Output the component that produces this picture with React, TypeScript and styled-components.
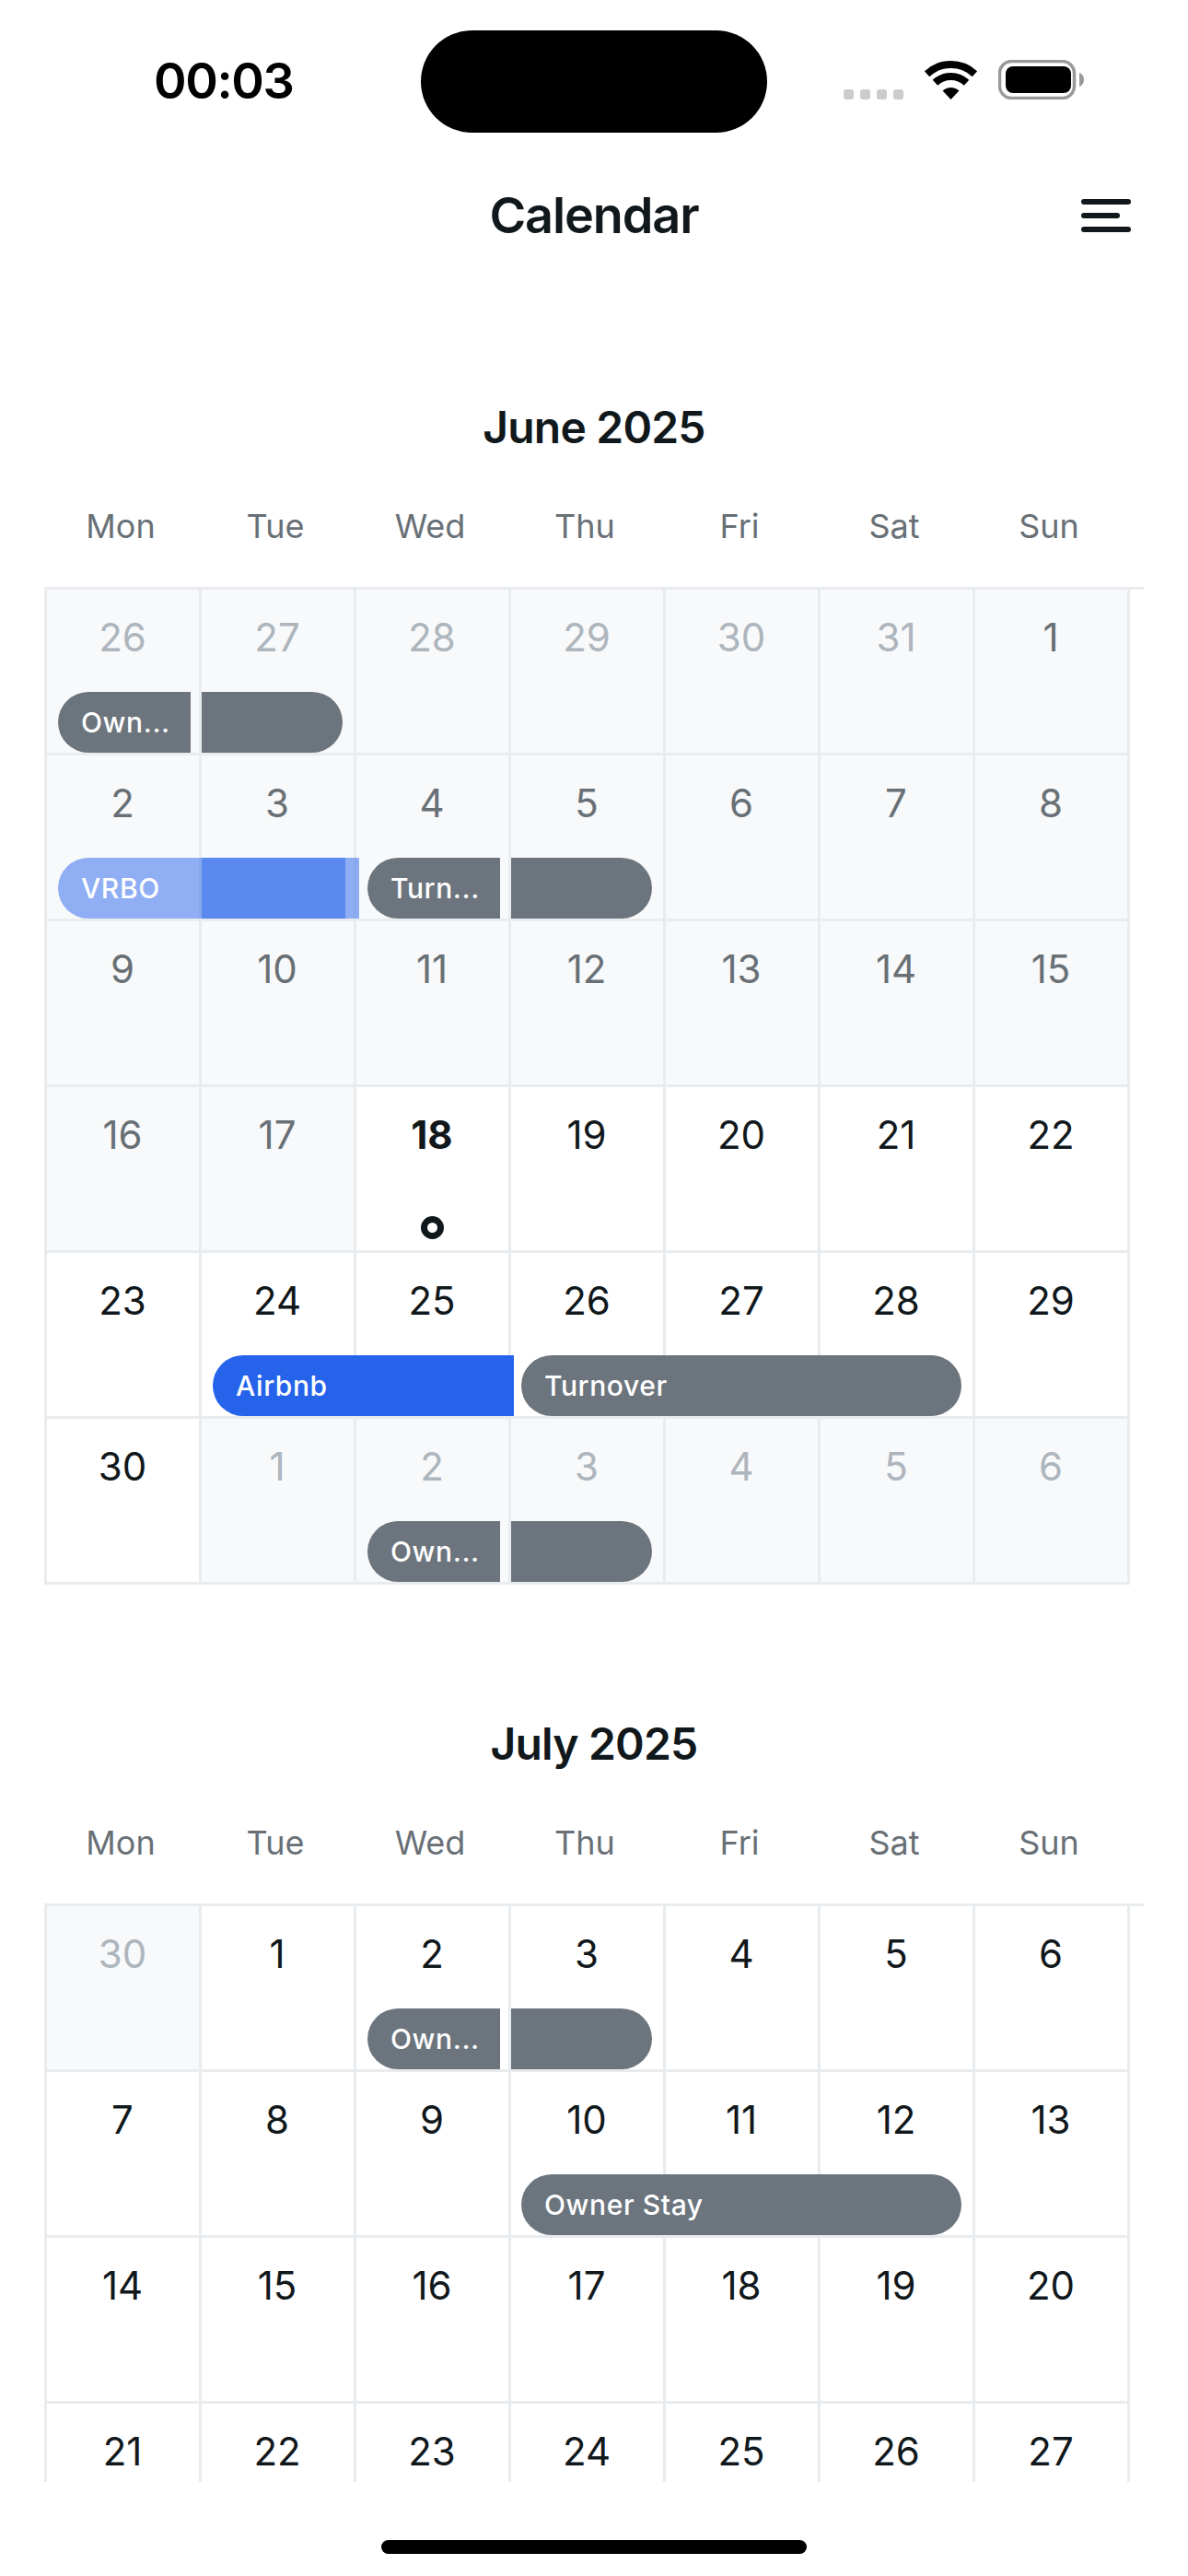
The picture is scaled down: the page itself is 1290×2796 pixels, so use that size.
import React from 'react'
import styled, { createGlobalStyle } from 'styled-components'

type DayKind = 'outside' | 'past' | 'today' | 'normal'
type BarShape = 'start' | 'end' | 'full' | 'startFlat' | 'endTint' | 'startTint'

type Bar = {
  label?: string
  shape: BarShape
  width: number
  left: number
  color: string
}

type Day = {
  n: number
  kind: DayKind
  bars?: Bar[]
}

const GREY = '#6c757d'
const BLUE = '#2563eb'
const TINT = 'rgba(37, 99, 235, 0.5)'

const weekdays = ['Mon', 'Tue', 'Wed', 'Thu', 'Fri', 'Sat', 'Sun']

const ownerSplit = (label: string): Bar => ({ label, shape: 'start', left: 12, width: 144, color: GREY })
const ownerTail: Bar = { shape: 'end', left: 0, width: 153, color: GREY }

const range = (from: number, to: number, kind: DayKind): Day[] => {
  const out: Day[] = []
  for (let n = from; n <= to; n++) out.push({ n, kind })
  return out
}

const withBars = (days: Day[], n: number, bars: Bar[]) =>
  days.map((d) => (d.n === n ? { ...d, bars } : d))

const buildJune = (): Day[] => {
  let may = range(26, 31, 'outside')
  may = withBars(may, 26, [ownerSplit('Own...')])
  may = withBars(may, 27, [ownerTail])

  let june = [
    ...range(1, 17, 'past'),
    { n: 18, kind: 'today' as DayKind },
    ...range(19, 30, 'normal'),
  ]
  june = withBars(june, 2, [{ label: 'VRBO', shape: 'startTint', left: 12, width: 312, color: TINT }])
  june = withBars(june, 3, [{ shape: 'endTint', left: 0, width: 171, color: TINT }])
  june = withBars(june, 4, [ownerSplit('Turn...')])
  june = withBars(june, 5, [ownerTail])
  june = withBars(june, 24, [{ label: 'Airbnb', shape: 'startFlat', left: 12, width: 327, color: BLUE }])
  june = withBars(june, 26, [{ label: 'Turnover', shape: 'full', left: 11, width: 478, color: GREY }])

  let next = range(1, 6, 'outside')
  next = withBars(next, 2, [ownerSplit('Own...')])
  next = withBars(next, 3, [ownerTail])

  return [...may, ...june, ...next]
}

const buildJuly = (): Day[] => {
  let july = range(1, 27, 'normal')
  july = withBars(july, 2, [ownerSplit('Own...')])
  july = withBars(july, 3, [ownerTail])
  july = withBars(july, 10, [{ label: 'Owner Stay', shape: 'full', left: 11, width: 478, color: GREY }])
  return [{ n: 30, kind: 'outside' }, ...july]
}

const months = [
  { title: 'June 2025', days: buildJune() },
  { title: 'July 2025', days: buildJuly() },
]

export default function App() {
  return (
    <>
      <GlobalStyle />
      <Screen>
        <StatusBar>
          <Clock>00:03</Clock>
          <Island />
          <StatusIcons>
            <SignalDots>
              <SignalDot />
              <SignalDot />
              <SignalDot />
              <SignalDot />
            </SignalDots>
            <svg width="57" height="42" viewBox="0 0 57 42">
              <path d="M2.6 14.2A38 38 0 0 1 54.4 14.2" fill="none" stroke="#000" strokeWidth="8" />
              <path d="M11.45 23.7A25 25 0 0 1 45.55 23.7" fill="none" stroke="#000" strokeWidth="8" />
              <path d="M28.5 42L19.6 32.5A13 13 0 0 1 37.4 32.5Z" fill="#000" />
            </svg>
            <svg width="93" height="43" viewBox="0 0 93 43">
              <rect x="1.5" y="1.5" width="81" height="40" rx="13" fill="none" stroke="#999" strokeWidth="3.5" />
              <rect x="8" y="7" width="71" height="29" rx="8" fill="#000" />
              <path d="M88 14C91 15 93 18 93 21.5S91 28 88 29Z" fill="#999" />
            </svg>
          </StatusIcons>
        </StatusBar>

        <NavBar>
          <span />
          <NavTitle>Calendar</NavTitle>
          <MenuButton>
            <MenuLine />
            <MenuLine $short />
            <MenuLine />
          </MenuButton>
        </NavBar>

        <ScrollArea>
          {months.map((month) => (
            <Month key={month.title}>
              <MonthTitle>{month.title}</MonthTitle>
              <WeekRow>
                {weekdays.map((w) => (
                  <WeekLabel key={w}>{w}</WeekLabel>
                ))}
              </WeekRow>
              <Grid>
                {month.days.map((day, i) => (
                  <Cell key={i} $kind={day.kind}>
                    <DayNumber $kind={day.kind}>{day.n}</DayNumber>
                    {day.kind === 'today' && <TodayRing />}
                    {day.bars?.map((bar, j) => (
                      <EventBar key={j} $shape={bar.shape} $left={bar.left} $width={bar.width} $color={bar.color}>
                        {bar.label}
                      </EventBar>
                    ))}
                  </Cell>
                ))}
              </Grid>
            </Month>
          ))}
        </ScrollArea>

        <HomeArea>
          <HomeBar />
        </HomeArea>
      </Screen>
    </>
  )
}

const GlobalStyle = createGlobalStyle`
  html, body {
    margin: 0;
    padding: 0;
    background: #fff;
  }
  * {
    box-sizing: border-box;
  }
`

const Screen = styled.div`
  width: 1290px;
  height: 2796px;
  display: flex;
  flex-direction: column;
  overflow: hidden;
  background: #ffffff;
  font-family: Inter, 'Noto Sans', sans-serif;
  color: #11181c;
`

const StatusBar = styled.div`
  height: 162px;
  padding: 33px 0 0 0;
  display: grid;
  grid-template-columns: 457px 376px 1fr;
  align-items: flex-start;
`

const Clock = styled.div`
  padding: 28px 0 0 167px;
  font-size: 54px;
  line-height: 54px;
  font-weight: 600;
  letter-spacing: -1.4px;
  color: #000;
`

const Island = styled.div`
  height: 111px;
  border-radius: 56px;
  background: #000;
`

const StatusIcons = styled.div`
  padding: 32px 0 0 83px;
  display: flex;
  align-items: flex-end;
  gap: 23px;
`

const SignalDots = styled.div`
  display: flex;
  gap: 7px;
`

const SignalDot = styled.div`
  width: 11px;
  height: 11px;
  border-radius: 3px;
  background: #cccccc;
`

const NavBar = styled.div`
  height: 144px;
  padding: 0 62px;
  display: grid;
  grid-template-columns: 1fr auto 1fr;
  align-items: center;
`

const NavTitle = styled.div`
  font-size: 54px;
  line-height: 72px;
  font-weight: 600;
  letter-spacing: -1.1px;
  color: #11181c;
`

const MenuButton = styled.div`
  justify-self: end;
  width: 54px;
  display: flex;
  flex-direction: column;
  gap: 9px;
`

const MenuLine = styled.div<{ $short?: boolean }>`
  width: ${(p) => (p.$short ? '42px' : '54px')};
  height: 6px;
  border-radius: 3px;
  background: #11181c;
`

const ScrollArea = styled.div`
  height: 2388px;
  padding-top: 126px;
  overflow: hidden;
  display: flex;
  flex-direction: column;
  gap: 141px;
`

const Month = styled.section`
  padding: 0 48px;
  flex-shrink: 0;
`

const MonthTitle = styled.div`
  height: 64px;
  font-size: 48px;
  line-height: 64px;
  font-weight: 600;
  letter-spacing: -0.8px;
  text-align: center;
  color: #11181c;
`

const WeekRow = styled.div`
  margin: 51px 0 42px -1px;
  display: grid;
  grid-template-columns: repeat(7, 168px);
`

const WeekLabel = styled.div`
  font-size: 36px;
  line-height: 48px;
  font-weight: 400;
  text-align: center;
  color: #687076;
`

const Grid = styled.div`
  width: 1194px;
  display: grid;
  grid-template-columns: repeat(7, 168px);
  grid-auto-rows: 180px;
  border-top: 3px solid #e9ecef;
  border-left: 3px solid #e9ecef;
`

const Cell = styled.div<{ $kind: DayKind }>`
  position: relative;
  padding: 24px 1px 0 0;
  border-right: 3px solid #e9ecef;
  border-bottom: 3px solid #e9ecef;
  background: ${(p) => (p.$kind === 'outside' || p.$kind === 'past' ? '#f8f9fa' : '#ffffff')};
  display: flex;
  flex-direction: column;
  align-items: center;
`

const dayColors: Record<DayKind, string> = {
  outside: '#adb5bd',
  past: '#687076',
  today: '#11181c',
  normal: '#11181c',
}

const DayNumber = styled.div<{ $kind: DayKind }>`
  font-size: 42px;
  line-height: 56px;
  font-weight: ${(p) => (p.$kind === 'today' ? 700 : 400)};
  color: ${(p) => dayColors[p.$kind]};
`

const TodayRing = styled.div`
  position: absolute;
  left: 70px;
  bottom: 12px;
  width: 25px;
  height: 25px;
  border-radius: 50%;
  border: 7px solid #11181c;
`

const barRadius: Record<BarShape, string> = {
  start: '33px 0 0 33px',
  startFlat: '33px 0 0 33px',
  startTint: '33px 0 0 33px',
  end: '0 33px 33px 0',
  endTint: '0',
  full: '33px',
}

const EventBar = styled.div<{ $shape: BarShape; $left: number; $width: number; $color: string }>`
  position: absolute;
  z-index: 2;
  left: ${(p) => p.$left}px;
  bottom: 0;
  width: ${(p) => p.$width}px;
  height: 66px;
  padding-left: 25px;
  border-radius: ${(p) => barRadius[p.$shape]};
  background: ${(p) => p.$color};
  display: flex;
  align-items: center;
  font-size: 30px;
  font-weight: 500;
  letter-spacing: 0.6px;
  white-space: nowrap;
  color: #ffffff;
`

const HomeArea = styled.div`
  height: 102px;
  padding-top: 63px;
  display: flex;
  justify-content: center;
  background: #fff;
`

const HomeBar = styled.div`
  width: 462px;
  height: 15px;
  border-radius: 8px;
  background: #000;
`
